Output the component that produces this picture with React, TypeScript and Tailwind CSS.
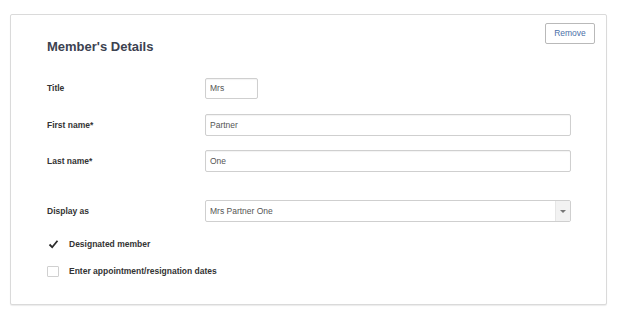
import React from "react";

const font = { fontFamily: '"Liberation Sans", Arial, sans-serif' };

function Row({ label, children, className }: { label: string; children: React.ReactNode; className?: string }) {
  return (
    <div className={"flex items-center " + (className ?? "")}>
      <div className="w-[158px] shrink-0 text-[8.5px] font-bold text-[#333]">{label}</div>
      {children}
    </div>
  );
}

function TextBox({ value, className }: { value: string; className?: string }) {
  return (
    <div
      className={
        "flex items-center rounded-[2px] border border-[#cfcfcf] bg-white pl-[4px] text-[8.5px] text-[#555] shadow-[inset_0_1px_1px_rgba(0,0,0,0.05)] " +
        (className ?? "")
      }
    >
      {value}
    </div>
  );
}

export default function App() {
  return (
    <div className="min-h-[316px] w-[626px] bg-white pl-[10px] pt-[14px]" style={font}>
      <div className="h-[291px] w-[597px] rounded-[2px] border border-[#dadada] bg-white pl-[36px] pr-[11px] pt-[8px] shadow-[0_1px_1px_rgba(0,0,0,0.08)]">
        <div className="flex items-start justify-between">
          <div className="mt-[16px] text-[13px] font-bold leading-[16px] text-[#3c4250]">Member's Details</div>
          <button className="h-[21px] w-[50px] rounded-[2px] border border-[#b9b9b9] bg-white text-[8.5px] text-[#4a6fa8]">
            Remove
          </button>
        </div>
        <div className="pr-[24px]">
          <Row label="Title" className="mt-[23px]">
            <TextBox value="Mrs" className="h-[21px] w-[53px]" />
          </Row>
          <Row label="First name*" className="mt-[15px]">
            <TextBox value="Partner" className="h-[22px] flex-1" />
          </Row>
          <Row label="Last name*" className="mt-[14px]">
            <TextBox value="One" className="h-[22px] flex-1" />
          </Row>
          <Row label="Display as" className="mt-[28px]">
            <div className="flex h-[22px] flex-1 items-stretch overflow-hidden rounded-[2px] border border-[#cfcfcf] bg-white">
              <div className="flex flex-1 items-center pl-[4px] text-[8.5px] text-[#555]">Mrs Partner One</div>
              <div className="flex w-[15px] items-center justify-center border-l border-[#e6e6e6] bg-[#f2f2f2]">
                <div className="h-0 w-0 border-l-[3px] border-r-[3px] border-t-[3px] border-l-transparent border-r-transparent border-t-[#777]" />
              </div>
            </div>
          </Row>
        </div>
        <div className="mt-[16px] flex items-center">
          <div className="flex h-[11px] w-[12px] items-center justify-center">
            <svg width="11" height="10" viewBox="0 0 11 10">
              <path d="M1.5 5.5 L4.2 8.2 L9.5 1.8" fill="none" stroke="#2b2b2b" strokeWidth="1.8" />
            </svg>
          </div>
          <div className="ml-[10px] text-[8.5px] font-bold text-[#333]">Designated member</div>
        </div>
        <div className="mt-[14px] flex items-center">
          <div className="h-[11px] w-[12px] rounded-[1px] border border-[#d0d0d0] bg-white" />
          <div className="ml-[10px] text-[8.5px] font-bold text-[#333]">Enter appointment/resignation dates</div>
        </div>
      </div>
    </div>
  );
}
